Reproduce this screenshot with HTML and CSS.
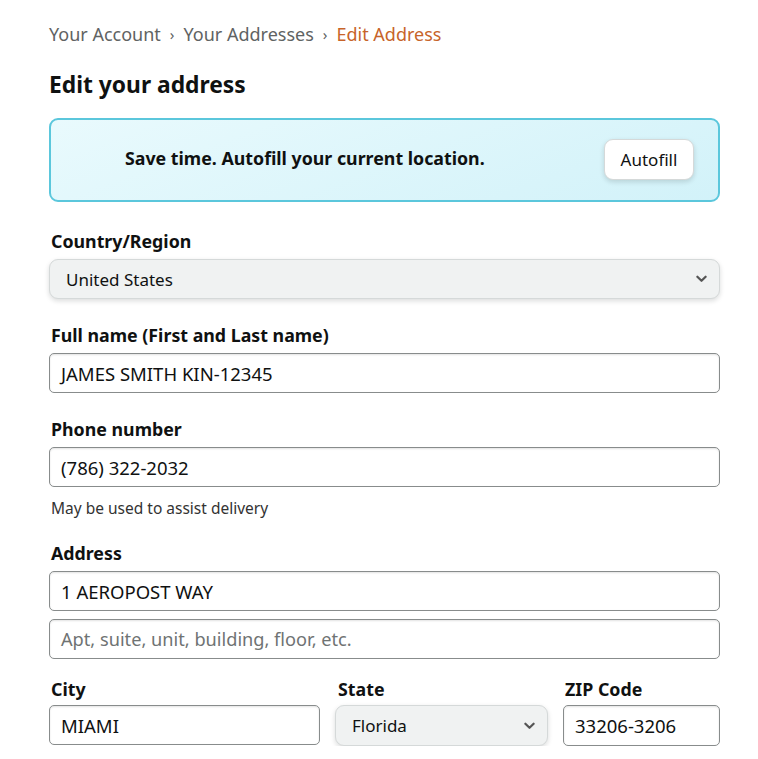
FILE: index.html
```html
<!DOCTYPE html>
<html lang="en">
<head>
<meta charset="utf-8">
<title>Edit Address</title>
<link rel="stylesheet" href="styles.css">
</head>
<body>
<main class="page">
  <nav class="crumbs">
    <span class="crumb">Your Account</span>
    <span class="sep">›</span>
    <span class="crumb">Your Addresses</span>
    <span class="sep">›</span>
    <span class="crumb current">Edit Address</span>
  </nav>
  <h1 class="title">Edit your address</h1>
  <section class="autofill">
    <p class="autofill-text">Save time. Autofill your current location.</p>
    <button class="autofill-btn">Autofill</button>
  </section>

  <div class="field first">
    <label class="label">Country/Region</label>
    <div class="select wide">
      <span>United States</span>
      <svg class="chev" viewBox="0 0 12 8" width="11" height="8"><path d="M1.5 1.5 L6 6 L10.5 1.5" fill="none" stroke="#555" stroke-width="2.4" stroke-linecap="round" stroke-linejoin="round"/></svg>
    </div>
  </div>

  <div class="field">
    <label class="label">Full name (First and Last name)</label>
    <div class="input">JAMES SMITH KIN-12345</div>
  </div>

  <div class="field">
    <label class="label">Phone number</label>
    <div class="input">(786) 322-2032</div>
    <p class="hint">May be used to assist delivery</p>
  </div>

  <div class="field address">
    <label class="label">Address</label>
    <div class="input">1 AEROPOST WAY</div>
    <div class="input placeholder">Apt, suite, unit, building, floor, etc.</div>
  </div>

  <div class="row">
    <div class="field city">
      <label class="label">City</label>
      <div class="input">MIAMI</div>
    </div>
    <div class="field state">
      <label class="label">State</label>
      <div class="select">
        <span>Florida</span>
        <svg class="chev" viewBox="0 0 12 8" width="11" height="8"><path d="M1.5 1.5 L6 6 L10.5 1.5" fill="none" stroke="#555" stroke-width="2.4" stroke-linecap="round" stroke-linejoin="round"/></svg>
      </div>
    </div>
    <div class="field zip">
      <label class="label">ZIP Code</label>
      <div class="input">33206-3206</div>
    </div>
  </div>
</main>
</body>
</html>
```

FILE: styles.css
```css
* { box-sizing: border-box; }
html, body { margin: 0; padding: 0; background: #fff; }
body {
  font-family: "Noto Sans", "Open Sans", Arial, sans-serif;
  color: #0f1111;
}
.page {
  width: 720px;
  padding: 20px 0 0 49px;
  display: flex;
  flex-direction: column;
}
.crumbs {
  display: flex;
  align-items: center;
  gap: 9px;
  font-size: 18px;
  line-height: 28px;
  color: #5f6363;
}
.crumb.current { color: #c7642a; }
.sep { font-size: 15px; }
.title {
  margin: 22px 0 0;
  font-size: 22.8px;
  line-height: 30px;
  font-weight: 700;
}
.autofill {
  margin-top: 18px;
  height: 84px;
  border: 2px solid #5bc7dc;
  border-radius: 9px;
  background: linear-gradient(160deg, #e9fafd 0%, #d2f2f9 100%);
  display: flex;
  align-items: center;
  justify-content: space-between;
  padding: 0 24px 0 74px;
}
.autofill-text {
  margin: 0 0 4px;
  font-size: 17.8px;
  font-weight: 700;
}
.autofill-btn {
  width: 90px;
  height: 41px;
  background: #fff;
  border: 1px solid #d5d9d9;
  border-radius: 9px;
  box-shadow: 0 2px 5px rgba(15, 17, 17, 0.15);
  font-family: inherit;
  font-size: 17px;
  color: #0f1111;
  padding: 0;
  margin-bottom: 2px;
}
.field {
  display: flex;
  flex-direction: column;
  margin-top: 25px;
}
.field.first { margin-top: 28px; }
.field.address { margin-top: 23px; }
.label {
  display: block;
  font-size: 17.8px;
  font-weight: 700;
  line-height: 22px;
  padding-left: 2px;
  margin-bottom: 7px;
}
.input {
  height: 40px;
  border: 1.5px solid #888c8c;
  border-radius: 5px;
  padding: 0 11px;
  display: flex;
  align-items: center;
  font-size: 18.5px;
  color: #0f1111;
  box-shadow: inset 0 1px 2px rgba(15,17,17,0.12);
}
.input + .input { margin-top: 8px; }
.input.placeholder { color: #6f7373; font-size: 18.2px; }
.select {
  height: 40px;
  border: 1px solid #d5d9d9;
  border-radius: 9px;
  background: #f0f2f2;
  box-shadow: 0 2px 5px rgba(15, 17, 17, 0.15);
  display: flex;
  align-items: center;
  justify-content: space-between;
  padding: 0 12px 0 16px;
  font-size: 17px;
}
.chev { display: block; }
.hint {
  margin: 10px 0 0 2px;
  font-size: 15.5px;
  color: #333;
}
.row {
  display: flex;
  gap: 15px;
}
.row .field { margin-top: 19px; }
.row .label { margin-bottom: 5px; }
.city { width: 271px; }
.state { width: 213px; }
.state .label { padding-left: 3px; }
.state .select { height: 41px; }
.zip { width: 157px; }
.zip .input { height: 41px; }
```
